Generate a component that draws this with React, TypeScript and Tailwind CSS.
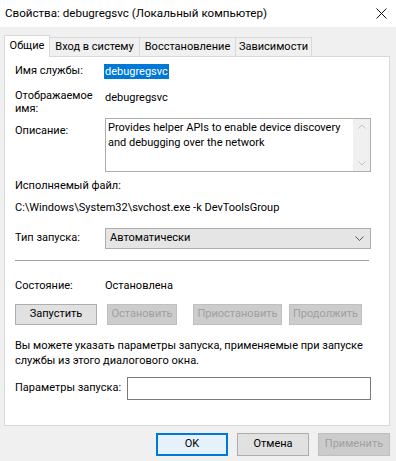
import * as React from 'react';

const font = { fontFamily: 'Roboto, "Liberation Sans", Arial, sans-serif' };

export default function App() {
  const tabs = [
    { label: 'Вход в систему', w: 'w-[90px]' },
    { label: 'Восстановление', w: 'w-[96px]' },
    { label: 'Зависимости', w: 'w-[76px]' },
  ];

  return (
    <div className="w-[396px] h-[461px] bg-[#f0f0f0] text-[11px] text-black overflow-hidden flex flex-col whitespace-nowrap" style={font}>
      {/* Title bar */}
      <div className="h-[27px] bg-white flex items-center justify-between pl-[5px] pr-[7px]">
        <span className="text-[11.6px] text-black">Свойства: debugregsvc (Локальный компьютер)</span>
        <svg width="11" height="11" viewBox="0 0 11 11" className="mr-[2px]">
          <path d="M0.5 0.5 L10.5 10.5 M10.5 0.5 L0.5 10.5" stroke="#111" strokeWidth="1" />
        </svg>
      </div>

      {/* Tabs */}
      <div className="flex items-end pl-[4px] mt-[7px] h-[22px] relative z-10">
        <div className="w-[46px] h-[22px] bg-white border border-[#d9d9d9] border-b-0 flex items-center justify-center -mb-px">Общие</div>
        {tabs.map((t) => (
          <div key={t.label} className={`${t.w} h-[19px] bg-[#f0f0f0] border border-[#d9d9d9] border-l-0 border-b-0 flex items-center justify-center`}>
            {t.label}
          </div>
        ))}
      </div>

      {/* Panel */}
      <div className="mx-[4px] w-[386px] h-[370px] bg-white border border-[#d9d9d9] px-[10px]">
        <div className="flex mt-[6px] h-[16px] items-center">
          <div className="w-[89px]">Имя службы:</div>
          <span className="bg-[#0078d7] text-white px-px leading-[15px]">debugregsvc</span>
        </div>

        <div className="flex mt-[10px]">
          <div className="w-[90px] leading-[13px]">Отображаемое<br />имя:</div>
          <div className="pt-[2px] leading-[13px]">debugregsvc</div>
        </div>

        <div className="flex mt-[3px]">
          <div className="w-[90px] pt-[5px]">Описание:</div>
          <div className="w-[266px] h-[54px] border border-[#adadad] flex">
            <div className="flex-1 px-[2px] pt-[1px] leading-[15px]">
              Provides helper APIs to enable device discovery<br />and debugging over the network
            </div>
            <div className="w-[17px] bg-[#f0f0f0] flex flex-col justify-between items-center py-[5px]">
              <svg width="8" height="5" viewBox="0 0 8 5"><path d="M0.5 4.5 L4 1 L7.5 4.5" stroke="#c2c2c2" fill="none" /></svg>
              <svg width="8" height="5" viewBox="0 0 8 5"><path d="M0.5 0.5 L4 4 L7.5 0.5" stroke="#c2c2c2" fill="none" /></svg>
            </div>
          </div>
        </div>

        <div className="mt-[7px] leading-[14px]">Исполняемый файл:</div>
        <div className="mt-[8px] leading-[14px]">C:\Windows\System32\svchost.exe -k DevToolsGroup</div>

        <div className="flex items-center mt-[13px]">
          <div className="w-[90px]">Тип запуска:</div>
          <div className="w-[266px] h-[21px] bg-[#e5e5e5] border border-[#adadad] flex items-center justify-between pl-[4px] pr-[6px]">
            <span>Автоматически</span>
            <svg width="9" height="5" viewBox="0 0 9 5"><path d="M0.5 0.5 L4.5 4.5 L8.5 0.5" stroke="#555" fill="none" /></svg>
          </div>
        </div>

        <div className="mt-[11px] w-[354px] h-px bg-[#a0a0a0]" />

        <div className="flex mt-[18px] leading-[14px]">
          <div className="w-[90px]">Состояние:</div>
          <div>Остановлена</div>
        </div>

        <div className="flex mt-[11px] h-[21px]">
          <div className="w-[82px] border border-[#adadad] bg-[#e1e1e1] flex items-center justify-center">Запустить</div>
          <div className="ml-[10px] w-[70px] border border-[#bfbfbf] bg-[#cccccc] text-[#a0a0a0] flex items-center justify-center">Остановить</div>
          <div className="ml-[16px] w-[89px] border border-[#bfbfbf] bg-[#cccccc] text-[#a0a0a0] flex items-center justify-center">Приостановить</div>
          <div className="ml-[7px] w-[73px] border border-[#bfbfbf] bg-[#cccccc] text-[#a0a0a0] flex items-center justify-center">Продолжить</div>
        </div>

        <div className="mt-[13px] leading-[15px]">
          Вы можете указать параметры запуска, применяемые при запуске<br />службы из этого диалогового окна.
        </div>

        <div className="flex items-center mt-[9px]">
          <div className="w-[112px]">Параметры запуска:</div>
          <div className="w-[244px] h-[23px] border border-[#7a7a7a] bg-white" />
        </div>
      </div>

      {/* Footer */}
      <div className="flex justify-end gap-[9px] pr-[6px] mt-[7px]">
        <div className="w-[72px] h-[23px] border-2 border-[#0078d7] bg-[#e5f1fb] flex items-center justify-center">OK</div>
        <div className="w-[72px] h-[23px] border border-[#adadad] bg-[#e1e1e1] flex items-center justify-center">Отмена</div>
        <div className="w-[72px] h-[23px] border border-[#bfbfbf] bg-[#cccccc] text-[#a0a0a0] flex items-center justify-center">Применить</div>
      </div>
    </div>
  );
}
